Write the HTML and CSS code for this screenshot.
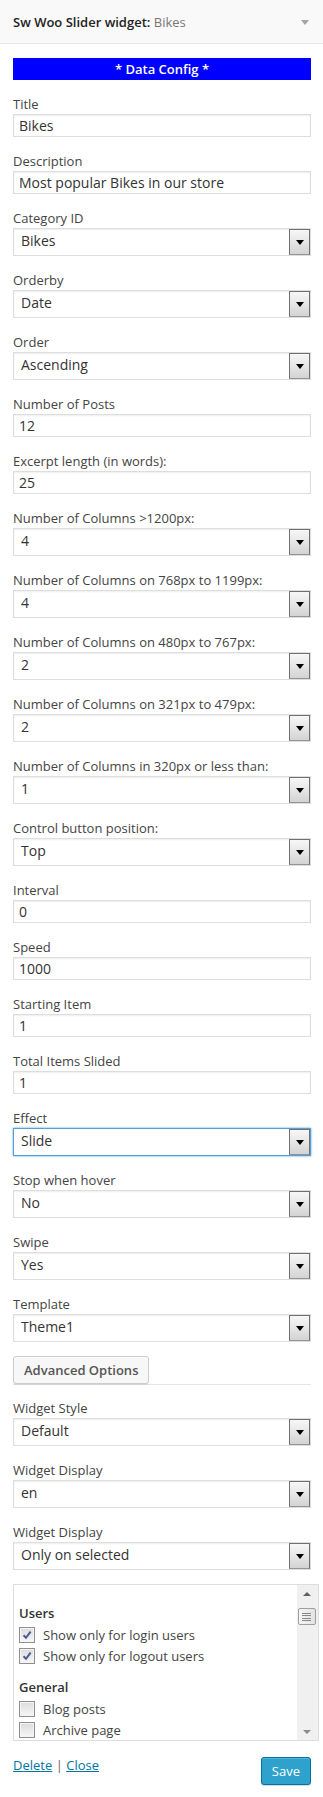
FILE: index.html
```html
<!DOCTYPE html>
<html>
  <head>
    <title>Sw Woo Slider widget</title>
    <meta name="viewport" content="width=device-width, initial-scale=1.0" />
    <link rel="stylesheet" href="styles.css">
  </head>
  <body>
    <div class="widget">
      <div class="widget-top">
        <h3 class="widget-title">Sw Woo Slider widget:<span class="in-title"> Bikes</span></h3>
        <span class="toggle"></span>
      </div>
      <div class="widget-inside">
        <div class="section-title">* Data Config *</div>

        <div class="field">
          <label>Title</label>
          <div class="text-input">Bikes</div>
        </div>
        <div class="field">
          <label>Description</label>
          <div class="text-input">Most popular Bikes in our store</div>
        </div>
        <div class="field">
          <label>Category ID</label>
          <div class="select"><span class="value">Bikes</span><span class="arrow"></span></div>
        </div>
        <div class="field">
          <label>Orderby</label>
          <div class="select"><span class="value">Date</span><span class="arrow"></span></div>
        </div>
        <div class="field">
          <label>Order</label>
          <div class="select"><span class="value">Ascending</span><span class="arrow"></span></div>
        </div>
        <div class="field">
          <label>Number of Posts</label>
          <div class="text-input">12</div>
        </div>
        <div class="field">
          <label>Excerpt length (in words):</label>
          <div class="text-input">25</div>
        </div>
        <div class="field">
          <label>Number of Columns &gt;1200px:</label>
          <div class="select"><span class="value">4</span><span class="arrow"></span></div>
        </div>
        <div class="field">
          <label>Number of Columns on 768px to 1199px:</label>
          <div class="select"><span class="value">4</span><span class="arrow"></span></div>
        </div>
        <div class="field">
          <label>Number of Columns on 480px to 767px:</label>
          <div class="select"><span class="value">2</span><span class="arrow"></span></div>
        </div>
        <div class="field">
          <label>Number of Columns on 321px to 479px:</label>
          <div class="select"><span class="value">2</span><span class="arrow"></span></div>
        </div>
        <div class="field">
          <label>Number of Columns in 320px or less than:</label>
          <div class="select"><span class="value">1</span><span class="arrow"></span></div>
        </div>
        <div class="field">
          <label>Control button position:</label>
          <div class="select"><span class="value">Top</span><span class="arrow"></span></div>
        </div>
        <div class="field">
          <label>Interval</label>
          <div class="text-input">0</div>
        </div>
        <div class="field">
          <label>Speed</label>
          <div class="text-input">1000</div>
        </div>
        <div class="field">
          <label>Starting Item</label>
          <div class="text-input">1</div>
        </div>
        <div class="field">
          <label>Total Items Slided</label>
          <div class="text-input">1</div>
        </div>
        <div class="field">
          <label>Effect</label>
          <div class="select focus"><span class="value">Slide</span><span class="arrow"></span></div>
        </div>
        <div class="field">
          <label>Stop when hover</label>
          <div class="select"><span class="value">No</span><span class="arrow"></span></div>
        </div>
        <div class="field">
          <label>Swipe</label>
          <div class="select"><span class="value">Yes</span><span class="arrow"></span></div>
        </div>
        <div class="field">
          <label>Template</label>
          <div class="select"><span class="value">Theme1</span><span class="arrow"></span></div>
        </div>

        <div class="advanced">
          <button class="button">Advanced Options</button>
        </div>

        <div class="field">
          <label>Widget Style</label>
          <div class="select"><span class="value">Default</span><span class="arrow"></span></div>
        </div>
        <div class="field">
          <label>Widget Display</label>
          <div class="select"><span class="value">en</span><span class="arrow"></span></div>
        </div>
        <div class="field">
          <label>Widget Display</label>
          <div class="select"><span class="value">Only on selected</span><span class="arrow"></span></div>
        </div>

        <div class="scroll-box">
          <div class="scroll-content">
            <h4 class="group-title">Users</h4>
            <div class="check-row"><span class="checkbox checked"><svg width="10" height="10" viewBox="0 0 10 10"><path d="M1.5 5.2 L4 7.8 L8.6 1.6" fill="none" stroke="#4a5a94" stroke-width="2"/></svg></span>Show only for login users</div>
            <div class="check-row"><span class="checkbox checked"><svg width="10" height="10" viewBox="0 0 10 10"><path d="M1.5 5.2 L4 7.8 L8.6 1.6" fill="none" stroke="#4a5a94" stroke-width="2"/></svg></span>Show only for logout users</div>
            <h4 class="group-title">General</h4>
            <div class="check-row"><span class="checkbox"></span>Blog posts</div>
            <div class="check-row"><span class="checkbox"></span>Archive page</div>
          </div>
          <div class="scrollbar">
            <span class="sb-btn"><span class="sb-up"></span></span>
            <span class="sb-thumb"><span class="grip"></span></span>
            <span class="sb-track"></span>
            <span class="sb-btn"><span class="sb-down"></span></span>
          </div>
        </div>

        <div class="actions">
          <div class="links"><a href="#">Delete</a> <span class="sep">|</span> <a href="#">Close</a></div>
          <button class="button button-primary">Save</button>
        </div>
      </div>
    </div>
  </body>
</html>
```

FILE: styles.css
```css
* {
  box-sizing: border-box;
}
body {
  margin: 0;
  background: #fff;
  color: #444;
  font-family: "Open Sans", sans-serif;
  font-size: 13px;
}
/* Widget header */
.widget-top {
  height: 44px;
  display: flex;
  align-items: center;
  justify-content: space-between;
  padding: 0 14px 0 13px;
  background: #f9f9f9;
  border-bottom: 1px solid #e5e5e5;
}
.widget-title {
  margin: 0;
  font-size: 13px;
  font-weight: 600;
  line-height: 20px;
  color: #222;
}
.in-title {
  font-weight: 400;
  color: #777;
}
.toggle {
  width: 0;
  height: 0;
  margin-top: 2px;
  border-left: 4px solid transparent;
  border-right: 4px solid transparent;
  border-top: 5px solid #a0a5aa;
}
.widget-inside {
  padding: 14px 12px 12px 13px;
}
.section-title {
  background: #00f;
  color: #fff;
  font-weight: 600;
  line-height: 22px;
  text-align: center;
}
/* Form fields */
.field {
  margin-top: 14px;
}
.field label {
  display: block;
  line-height: 20px;
}
.text-input {
  height: 23px;
  padding: 0 5px;
  border: 1px solid #ddd;
  box-shadow: inset 0 1px 2px rgba(0, 0, 0, 0.07);
  color: #333;
  font-size: 14px;
  line-height: 21px;
  white-space: nowrap;
}
.select {
  height: 28px;
  display: flex;
  border: 1px solid #ddd;
  box-shadow: inset 0 1px 2px rgba(0, 0, 0, 0.07);
  color: #333;
  font-size: 14px;
}
.select.focus {
  border-color: #5b9dd9;
  box-shadow: 0 0 2px rgba(30, 140, 190, 0.8);
}
.select .value {
  flex: 1;
  padding: 0 7px;
  line-height: 23px;
  white-space: nowrap;
}
.select .arrow {
  width: 21px;
  display: flex;
  align-items: center;
  justify-content: center;
  border: 1px solid #707070;
  border-bottom-color: #959595;
  background: linear-gradient(#f7f7f7, #e6e6e6 50%, #d3d3d3);
}
.select .arrow::after {
  content: "";
  width: 0;
  height: 0;
  margin-top: 1px;
  border-left: 4.5px solid transparent;
  border-right: 4.5px solid transparent;
  border-top: 5px solid #000;
}
/* Buttons */
.button {
  height: 28px;
  padding: 0 10px;
  border: 1px solid #ccc;
  border-radius: 3px;
  background: #f7f7f7;
  box-shadow: inset 0 1px 0 #fff, 0 1px 0 rgba(0, 0, 0, 0.08);
  color: #555;
  font-family: "Open Sans", sans-serif;
  font-size: 13px;
  line-height: 26px;
}
.advanced {
  margin-top: 14px;
  border-bottom: 1px solid #e5e5e5;
}
.advanced .button {
  display: block;
  font-weight: 600;
}
.advanced + .field {
  margin-top: 13px;
}
.button-primary {
  margin-top: 2px;
  border-color: #0074a2;
  background: #2ea2cc;
  box-shadow: inset 0 1px 0 rgba(120, 200, 230, 0.5), 0 1px 0 rgba(0, 0, 0, 0.15);
  color: #fff;
}
/* Page list box */
.scroll-box {
  width: 306px;
  height: 157px;
  margin-top: 14px;
  display: flex;
  border: 1px solid #ddd;
}
.scroll-content {
  flex: 1;
  overflow: hidden;
  padding: 8px 0 0 5px;
}
.group-title {
  margin: 10px 0 1px;
  color: #333;
  font-size: 13px;
  font-weight: 600;
  line-height: 20px;
}
.check-row {
  height: 21.5px;
  display: flex;
  align-items: center;
  white-space: nowrap;
}
.checkbox {
  width: 16px;
  height: 16px;
  margin-right: 8px;
  display: flex;
  align-items: center;
  justify-content: center;
  border: 1px solid #8f8f8f;
  background: linear-gradient(#dcdcdc, #f6f6f6);
  box-shadow: inset 0 0 0 1px #f4f4f4;
}
.scrollbar {
  width: 21px;
  display: flex;
  flex-direction: column;
  align-items: center;
  padding-right: 2px;
  background: #f0f0f0;
}
.sb-btn {
  height: 17px;
  display: flex;
  align-items: center;
  justify-content: center;
}
.sb-up {
  width: 0;
  height: 0;
  border-left: 4px solid transparent;
  border-right: 4px solid transparent;
  border-bottom: 4px solid #606060;
}
.sb-down {
  width: 0;
  height: 0;
  border-left: 4px solid transparent;
  border-right: 4px solid transparent;
  border-top: 4px solid #8a8a8a;
}
.sb-thumb {
  width: 18px;
  height: 17px;
  margin-top: 6px;
  display: flex;
  align-items: center;
  justify-content: center;
  border: 1px solid #9e9e9e;
  border-radius: 2px;
  background: linear-gradient(to right, #f6f6f6, #e2e2e2);
}
.grip {
  width: 9px;
  height: 8px;
  background: repeating-linear-gradient(#888 0 1px, transparent 1px 2.33px);
}
.sb-track {
  flex: 1;
}
/* Footer */
.actions {
  margin-top: 14px;
  display: flex;
  align-items: flex-start;
  justify-content: space-between;
}
.links {
  line-height: 20px;
}
.links a {
  color: #0074a2;
}
.sep {
  color: #666;
}
```
